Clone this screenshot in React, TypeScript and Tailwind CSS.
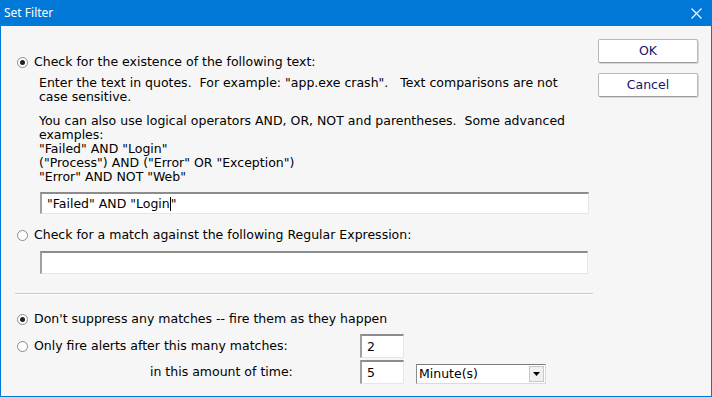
import React from "react";

function Radio({ checked }: { checked?: boolean }) {
  return (
    <span className="relative flex h-[11px] w-[11px] shrink-0 items-center justify-center rounded-full border border-[#8a8a8a] bg-white">
      {checked && <span className="h-[5px] w-[5px] rounded-full bg-[#222]" />}
    </span>
  );
}

function Sunken({ className, children }: { className?: string; children?: React.ReactNode }) {
  return (
    <div
      className={
        "flex items-center border-t-2 border-l-2 border-r border-b border-t-[#8c8c8c] border-l-[#a0a0a0] border-r-[#e6e6e6] border-b-[#e6e6e6] bg-white " +
        (className ?? "")
      }
    >
      {children}
    </div>
  );
}

export default function App() {
  return (
    <div
      className="flex h-[397px] w-[712px] flex-col border-x border-b border-[#0078d7] bg-[#f6f6f6] text-[12.5px] leading-[14px] text-black"
      style={{ fontFamily: '"DejaVu Sans", Verdana, sans-serif' }}
    >
      <div className="-mx-px flex h-[26px] shrink-0 items-center justify-between bg-[#0078d7] pl-[4px] pr-[10px]">
        <span className="text-[12px] text-white" style={{ fontFamily: '"Noto Sans", "Open Sans", sans-serif' }}>
          Set Filter
        </span>
        <svg width="11" height="11" viewBox="0 0 11 11" className="mr-[0px]">
          <path d="M0.5 0.5 L10.5 10.5 M10.5 0.5 L0.5 10.5" stroke="white" strokeWidth="1.1" />
        </svg>
      </div>

      <div className="flex flex-1">
        <div className="ml-[14px] flex w-[578px] flex-col pt-[29px]">
          <div className="flex items-center gap-[6px] pl-[2px]">
            <Radio checked />
            <span>Check for the existence of the following text:</span>
          </div>
          <div className="ml-[24px] mt-[7px]">
            <p>
              Enter the text in quotes.&nbsp; For example: "app.exe crash".&nbsp;&nbsp; Text comparisons are not
              <br />
              case sensitive.
            </p>
            <p className="mt-[10px]">
              You can also use logical operators AND, OR, NOT and parentheses.&nbsp; Some advanced
              <br />
              examples:
              <br />
              "Failed" AND "Login"
              <br />
              ("Process") AND ("Error" OR "Exception")
              <br />
              "Error" AND NOT "Web"
            </p>
          </div>
          <Sunken className="ml-[25px] mt-[8px] h-[22px] w-[549px] pl-[5px]">
            <span>"Failed" AND "Login</span>
            <span className="h-[14px] w-px bg-black" />
            <span>"</span>
          </Sunken>

          <div className="mt-[14px] flex items-center gap-[6px] pl-[2px]">
            <Radio />
            <span>Check for a match against the following Regular Expression:</span>
          </div>
          <Sunken className="ml-[25px] mt-[9px] h-[23px] w-[548px]" />

          <div className="mt-[19px] h-[2px] w-[578px] border-t border-b border-t-[#c8c8c8] border-b-white" />

          <div className="mt-[17px] flex items-center gap-[6px] pl-[2px]">
            <Radio checked />
            <span>Don't suppress any matches -- fire them as they happen</span>
          </div>

          <div className="mt-[8px] flex items-center">
            <div className="flex w-[345px] items-center gap-[6px] pl-[2px]">
              <Radio />
              <span>Only fire alerts after this many matches:</span>
            </div>
            <Sunken className="h-[24px] w-[44px] pl-[5px]">2</Sunken>
          </div>

          <div className="mt-[2px] flex items-center">
            <div className="w-[345px] pl-[135px]">in this amount of time:</div>
            <Sunken className="h-[24px] w-[44px] pl-[5px]">5</Sunken>
            <div className="ml-[12px] mt-[4px] flex h-[20px] w-[130px] items-center border border-t-[#7a7a7a] border-l-[#8c8c8c] border-r-[#dadada] border-b-[#dadada] bg-white">
              <span className="flex-1 pl-[2px]">Minute(s)</span>
              <span className="mr-[1px] flex h-[16px] w-[15px] items-center justify-center border border-[#c8c8c8] bg-[#f0f0f0]">
                <svg width="7" height="4" viewBox="0 0 7 4">
                  <path d="M0 0 H7 L3.5 4 Z" fill="black" />
                </svg>
              </span>
            </div>
          </div>
        </div>

        <div className="ml-[5px] flex flex-col gap-[10px] pt-[13px]">
          {["OK", "Cancel"].map((t) => (
            <div
              key={t}
              className="flex h-[24px] w-[100px] items-center justify-center rounded-[2px] border border-[#b9b9b9] border-b-[#9a9a9a] bg-white text-[#141470] shadow-[1px_1px_0_#d8d8d8]"
            >
              {t}
            </div>
          ))}
        </div>
      </div>
    </div>
  );
}
